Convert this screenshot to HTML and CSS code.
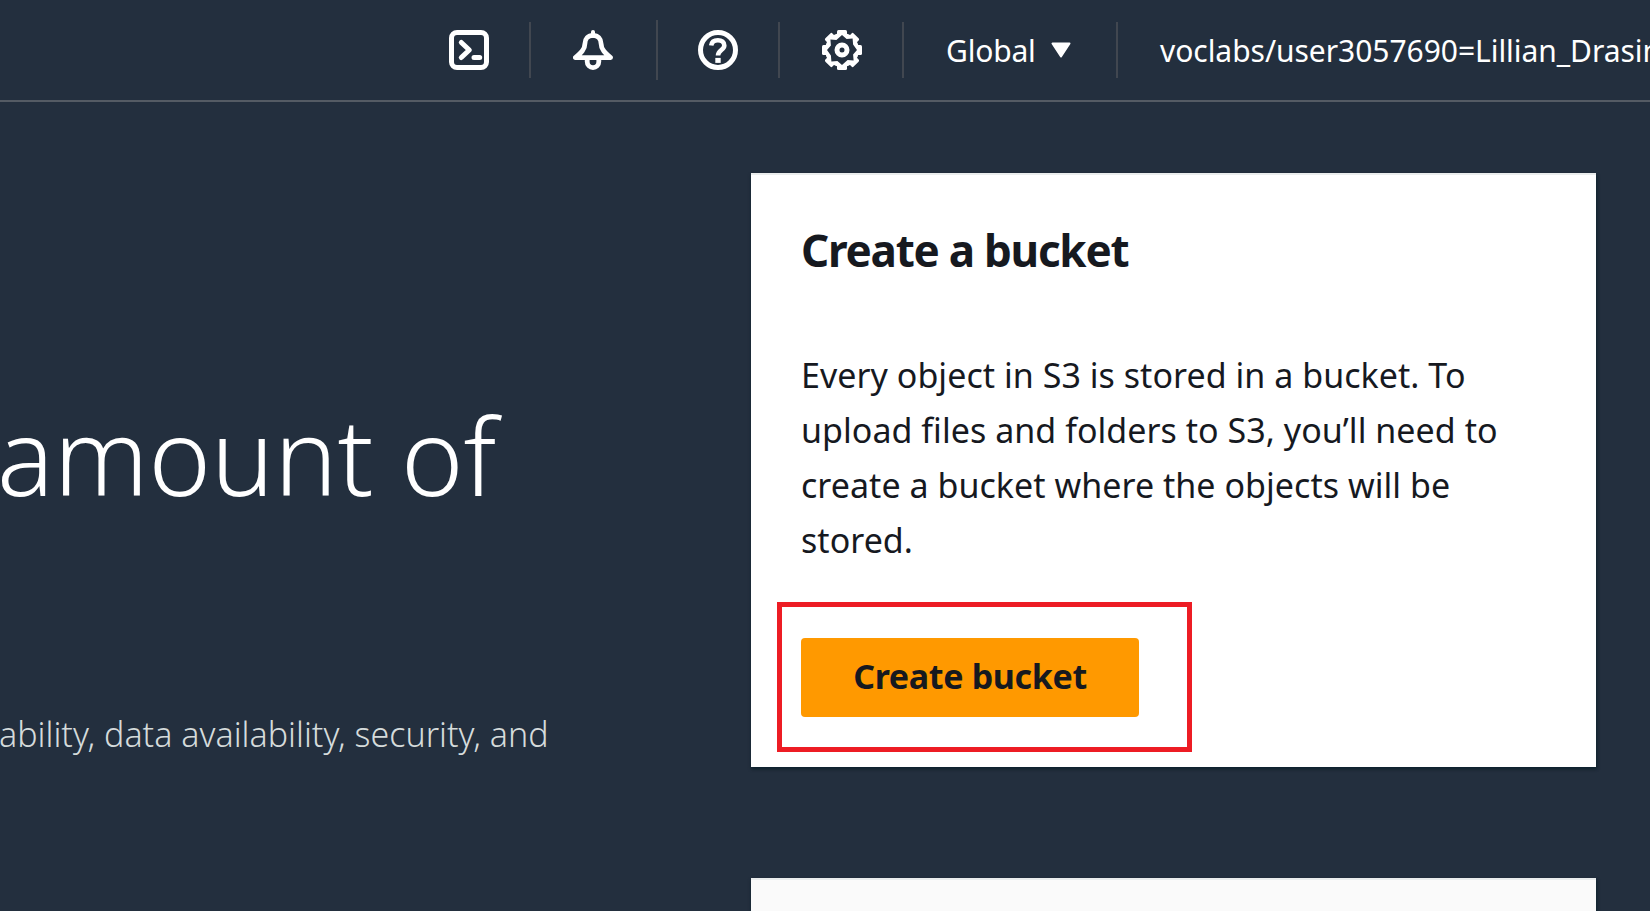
FILE: index.html
```html
<!DOCTYPE html>
<html lang="en">
<head>
<meta charset="utf-8">
<title>Amazon S3</title>
<link rel="stylesheet" href="styles.css">
</head>
<body>
<header class="topbar">
  <div class="tool tool-shell">
    <svg class="icon" viewBox="0 0 40 40" fill="none" stroke="#fff" stroke-width="5" stroke-linecap="round" stroke-linejoin="round"><rect x="2.5" y="2.5" width="35" height="35" rx="5.5"/><path d="M12.3 12.5l8 7.5-8 7.5M25 27.5h5.700"/></svg>
  </div>
  <div class="tool tool-bell">
    <svg class="icon" viewBox="0 0 40 40" fill="none" stroke="#fff" stroke-width="4.800" stroke-linejoin="round"><path d="M20 5.300c-4.800 0-8.100 3.600-8.100 8.400 0 5.300-3.500 8.700-9.500 13.900h35.200c-6-5.200-9.500-8.600-9.500-13.900 0-4.800-3.300-8.400-8.100-8.400zM14.200 28.500v3.300a5.800 5.800 0 0 0 11.600 0v-3.300"/><path d="M20 2v4" stroke-linecap="round" stroke-width="4"/></svg>
  </div>
  <div class="tool tool-help">
    <svg class="icon" viewBox="0 0 40 40" fill="none" stroke="#fff" stroke-width="5"><circle cx="20" cy="20" r="17.500"/><path d="M13.200 15.600c.4-3.500 3.100-5.400 6.700-5.400 3.800 0 6.400 2 6.400 5.200 0 4.700-6.300 4.600-6.300 10.200" stroke-width="4.600"/><path d="M17.300 30.400h5.400" stroke-width="5"/></svg>
  </div>
  <div class="tool tool-gear">
    <svg class="icon" viewBox="0 0 40 40" fill="#fff"><circle cx="20" cy="20" r="17"/><rect x="15" width="10" height="40" rx="1.500"/><rect x="15" width="10" height="40" rx="1.500" transform="rotate(45 20 20)"/><rect x="15" width="10" height="40" rx="1.500" transform="rotate(90 20 20)"/><rect x="15" width="10" height="40" rx="1.500" transform="rotate(135 20 20)"/><path fill="#232f3e" d="M20 5l4.600 3.900 6-.5.500 6L35 20l-3.900 4.600.500 6-6-.5L20 35l-4.600-3.900-6 .5-.5-6L5 20l3.900-4.600-.5-6 6 .5z"/><circle cx="20" cy="20" r="5" fill="none" stroke="#fff" stroke-width="5"/></svg>
  </div>
  <div class="region"><span>Global</span>
    <svg class="caret" viewBox="0 0 20 16"><path d="M1.500 1.500h17L10 14.500z" fill="#fff" stroke="#fff" stroke-width="2" stroke-linejoin="round"/></svg>
  </div>
  <div class="account">voclabs/user3057690=Lillian_Drasin</div>
</header>
<main class="page">
  <section class="hero">
    <h1 class="hero-title">amount of</h1>
    <p class="hero-text">ability, data availability, security, and</p>
  </section>
  <aside class="side">
    <section class="card">
      <h2 class="card-title">Create a bucket</h2>
      <p class="card-text">Every object in S3 is stored in a bucket. To upload files and folders to S3, you’ll need to create a bucket where the objects will be stored.</p>
      <div class="action"><button class="button">Create bucket</button><span class="highlight"></span></div>
    </section>
    <section class="card card-next"></section>
  </aside>
</main>
</body>
</html>
```
FILE: styles.css
```css
* { box-sizing: border-box; }
body {
  margin: 0;
  height: 911px;
  overflow: hidden;
  background: #232f3e;
  color: #fff;
  font-family: "Noto Sans", "Open Sans", sans-serif;
}
h1, h2, p { margin: 0; }

.topbar {
  display: flex;
  align-items: flex-start;
  height: 102px;
  padding: 20px 0 0 449px;
  border-bottom: 2px solid #545b64;
  overflow: hidden;
}
.tool, .region {
  display: flex;
  flex-shrink: 0;
  align-items: center;
  height: 56px;
  margin-top: 2px;
  border-right: 2px solid #414750;
}
.icon { display: block; flex-shrink: 0; width: 40px; height: 40px; }
.tool-shell { width: 82px; }
.tool-bell { width: 127px; height: 60px; margin-top: 0; padding-left: 42px; }
.tool-help { width: 122px; padding-left: 40px; }
.tool-gear { width: 124px; padding-left: 42px; }
.region {
  width: 214px;
  padding-left: 42px;
  gap: 15px;
  font-size: 30px;
  letter-spacing: -0.2px;
}
.caret { width: 20px; height: 16px; }
.account {
  flex: 1 0 0;
  height: 60px;
  padding-left: 42px;
  font-size: 30px;
  line-height: 61px;
  letter-spacing: -0.04px;
  white-space: nowrap;
}

.page { display: flex; height: 809px; overflow: hidden; }
.hero { width: 751px; padding-top: 283px; white-space: nowrap; }
.hero-title {
  margin-left: -3px;
  font-size: 106px;
  font-weight: 300;
  line-height: 140px;
}
.hero-text {
  margin: 184px 0 0 -1px;
  color: #d5dbdb;
  font-size: 34px;
  font-weight: 300;
  line-height: 50px;
}

.side { width: 845px; padding-top: 71px; }
.card {
  height: 594px;
  padding: 45px 50px 0;
  border-top: 2px solid #eaeded;
  background: #fff;
  box-shadow: 0 2px 3px rgba(0, 28, 36, .5), 2px 2px 3px rgba(0, 28, 36, .3);
  color: #16191f;
}
.card-next { margin-top: 111px; background: #fafafa; }
.card-title {
  font-size: 44px;
  font-weight: 700;
  line-height: 60px;
  letter-spacing: -1.25px;
}
.card-text {
  margin: 68px 0 70px;
  font-size: 34px;
  line-height: 55px;
  letter-spacing: 0.04px;
}
.action { position: relative; }
.button {
  display: block;
  width: 338px;
  height: 79px;
  padding: 0 0 3px;
  border: 0;
  border-radius: 4px;
  background: #f90;
  color: #16191f;
  font: 700 34px/76px "Noto Sans", "Open Sans", sans-serif;
  letter-spacing: -0.35px;
}
.highlight {
  position: absolute;
  top: -36px;
  left: -24px;
  width: 415px;
  height: 150px;
  border: 5px solid #ed1c24;
}
```
